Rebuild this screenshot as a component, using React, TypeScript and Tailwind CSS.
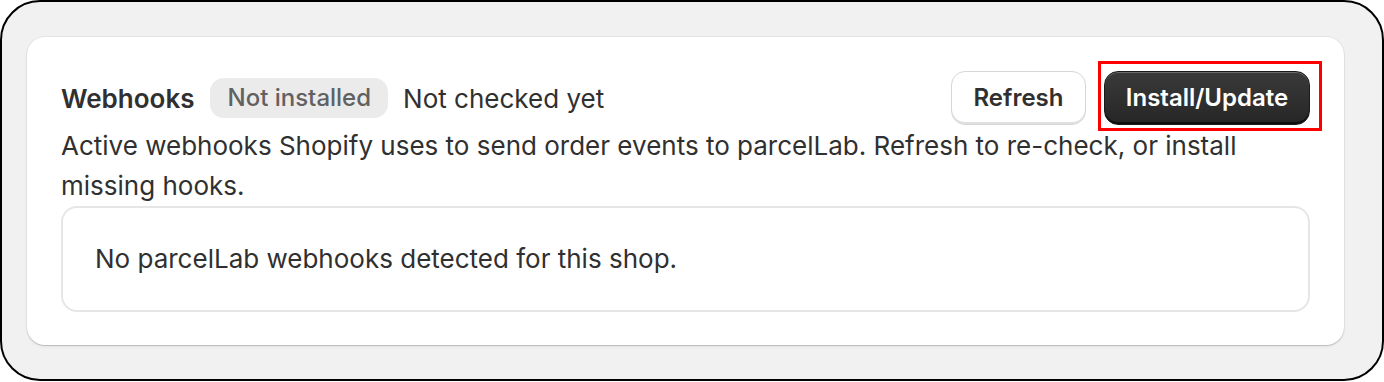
import React from "react";

export default function App() {
  return (
    <div
      className="w-[1384px] h-[382px] bg-white"
      style={{ fontFamily: "Inter, 'Noto Sans', sans-serif" }}
    >
      <div className="w-[1384px] h-[381px] bg-[#f1f1f1] border-2 border-black rounded-[40px] pl-[25px] pr-[38px] pt-[35px]">
        <div className="bg-white rounded-[18px] shadow-[0_1px_0_0_rgba(0,0,0,0.12),0_0_0_1px_rgba(0,0,0,0.05),0_2px_3px_rgba(0,0,0,0.06)] px-[34px] pt-[34px] pb-[33px]">
          <div className="flex items-center h-[54px] text-[26px] text-[#303030]">
            <div className="font-semibold">Webhooks</div>
            <div className="ml-[16px] h-[40px] px-[17px] rounded-[14px] bg-[#ebebeb] text-[#616161] text-[24px] font-medium flex items-center">
              Not installed
            </div>
            <div className="ml-[15px]">Not checked yet</div>
            <div className="ml-auto flex items-center gap-[18px]">
              <button className="h-[54px] w-[135px] rounded-[14px] bg-white border border-[#d6d6d6] shadow-[inset_0_-2px_0_rgba(0,0,0,0.12)] font-semibold text-[#303030] text-[24px]">
                Refresh
              </button>
              <div className="relative">
                <button className="h-[54px] w-[206px] rounded-[14px] bg-[linear-gradient(#3a3a3a,#262626)] border border-[#1a1a1a] shadow-[inset_0_1px_0_rgba(255,255,255,0.25),inset_0_-2px_0_rgba(0,0,0,0.6)] font-semibold text-white text-[24px]">
                  Install/Update
                </button>
                <div className="absolute -left-[6px] -top-[10px] w-[224px] h-[70px] border-[3px] border-[#ff0000] pointer-events-none" />
              </div>
            </div>
          </div>
          <p className="mt-[1px] text-[26px] leading-[40px] text-[#303030]">
            Active webhooks Shopify uses to send order events to parcelLab. Refresh to re-check, or install missing hooks.
          </p>
          <div className="border-2 border-[#e6e6e6] rounded-[16px] px-[32px] py-[31px] text-[26px] leading-[40px] text-[#303030]">
            No parcelLab webhooks detected for this shop.
          </div>
        </div>
      </div>
    </div>
  );
}
